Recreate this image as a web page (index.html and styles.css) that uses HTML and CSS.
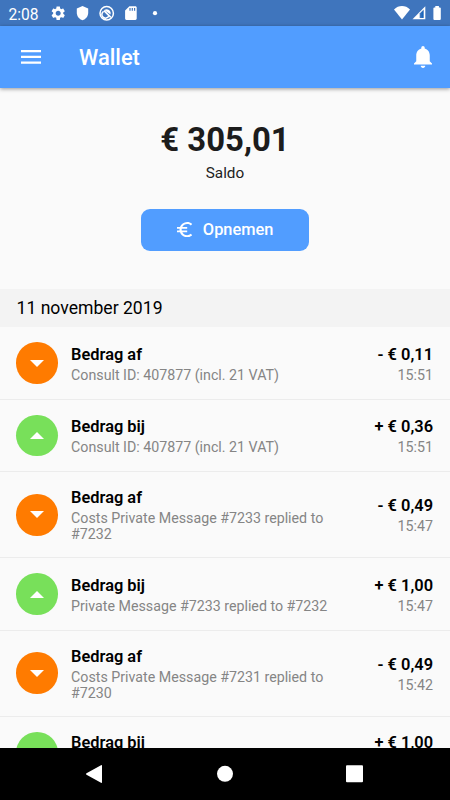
FILE: index.html
```html
<!DOCTYPE html>
<html lang="nl">
<head>
<meta charset="utf-8">
<title>Wallet</title>
<link rel="stylesheet" href="styles.css">
</head>
<body>
<div class="screen">
  <div class="status">
    <span class="clock">2:08</span>
    <svg class="status-left" width="120" height="26" viewBox="0 0 120 26" fill="#fff">
      <path transform="translate(9.8 4.8) scale(.7)" d="M19.14 12.94c.04-.3.06-.61.06-.94 0-.32-.02-.64-.07-.94l2.03-1.58c.18-.14.23-.41.12-.61l-1.92-3.32c-.12-.22-.37-.29-.59-.22l-2.39.96c-.5-.38-1.03-.7-1.62-.94l-.36-2.54c-.04-.24-.24-.41-.48-.41h-3.84c-.24 0-.43.17-.47.41l-.36 2.54c-.59.24-1.13.57-1.62.94l-2.39-.96c-.22-.08-.47 0-.59.22L2.74 8.87c-.12.21-.08.47.12.61l2.03 1.58c-.05.3-.09.63-.09.94s.02.64.07.94l-2.03 1.58c-.18.14-.23.41-.12.61l1.92 3.32c.12.22.37.29.59.22l2.39-.96c.5.38 1.03.7 1.62.94l.36 2.54c.05.24.24.41.48.41h3.84c.24 0 .44-.17.47-.41l.36-2.54c.59-.24 1.13-.56 1.62-.94l2.39.96c.22.08.47 0 .59-.22l1.92-3.32c.12-.22.07-.47-.12-.61zM12 15.6c-1.98 0-3.6-1.62-3.6-3.6s1.62-3.6 3.6-3.6 3.6 1.62 3.6 3.6-1.62 3.6-3.6 3.6z"/>
      <path d="M42.500 6l5.700 2.500v4.200c0 3.500-2.400 6.500-5.700 7.500-3.300-1-5.700-4-5.700-7.500V8.500z"/>
      <g fill="none" stroke="#fff"><circle cx="66.700" cy="13.200" r="6.700" stroke-width="1.500"/><path d="M63.600 11.300a3.700 3.700 0 1 0 5.200 4.900" stroke-width="1.500"/><path d="M64.200 10.100a4 4 0 0 1 6.300 4.300z" fill="#fff" stroke="none"/><path d="M64 10.600l6.800 6.800" stroke-width="1.600"/></g>
      <path fill-rule="evenodd" d="M89.400 6.300h6c.7 0 1.300.6 1.300 1.300v11c0 .7-.6 1.300-1.300 1.300h-9c-.7 0-1.300-.6-1.300-1.300v-8zM89.400 8v2.700h1.200V8zM91.700 8v2.700h1.200V8zM94 8v2.700h1.200V8z"/>
      <circle cx="115" cy="13.200" r="2.100"/>
    </svg>
    <svg class="status-right" width="50" height="26" viewBox="0 0 50 26" fill="#fff">
      <path d="M2 9.500C6.500 4.900 13.500 4.900 18 9.500l-8 10z"/>
      <path d="M20.500 19.200L33.300 6.200v13z"/><path d="M27.700 18v-4.500l4-4V18z" fill="#3f75bd"/><path d="M29.500 17.800v-5l1.700-1.700v6.700z" fill="#1766bd"/>
      <path d="M43.300 6h3.600v1.400h1c.5 0 .9.400.9.900v10.800c0 .5-.4.900-.9.900h-5.600c-.5 0-.9-.4-.9-.9V8.300c0-.5.400-.9.900-.9h1z"/>
    </svg>
  </div>
  <header class="bar">
    <svg class="menu" width="20" height="14" viewBox="0 0 20 14" fill="#fff"><path d="M0 0h20v2.200H0zM0 5.800h20V8H0zM0 11.500h20v2.200H0z"/></svg>
    <h1>Wallet</h1>
    <svg class="bell" width="18" height="22" viewBox="4 2.500 16 19.500" preserveAspectRatio="none" fill="#fff"><path d="M12 22c1.100 0 2-.9 2-2h-4c0 1.100.9 2 2 2zm6-6v-5c0-3.070-1.630-5.640-4.500-6.320V4c0-.83-.67-1.500-1.500-1.500s-1.500.67-1.500 1.500v.68C7.640 5.360 6 7.920 6 11v5l-2 2v1h16v-1l-2-2z"/></svg>
  </header>
  <main>
    <section class="balance">
      <div class="total">€ 305,01</div>
      <div class="label">Saldo</div>
      <button class="withdraw">
        <svg width="15.300" height="15.300" viewBox="3 3 18 18" fill="#fff"><path d="M15 18.500c-2.510 0-4.680-1.420-5.760-3.500H15v-2H8.580c-.05-.33-.08-.66-.08-1s.03-.67.080-1H15V9H9.240C10.320 6.920 12.500 5.500 15 5.500c1.610 0 3.090.590 4.230 1.570L21 5.300C19.410 3.870 17.300 3 15 3c-3.920 0-7.240 2.510-8.480 6H3v2h3.060c-.04.330-.06.660-.06 1s.02.670.060 1H3v2h3.520c1.240 3.490 4.560 6 8.480 6 2.310 0 4.410-.87 6-2.300l-1.780-1.770c-1.130.980-2.600 1.570-4.220 1.570z"/></svg>
        <span>Opnemen</span>
      </button>
    </section>
    <h2>11 november 2019</h2>
    <ul>
      <li><i class="dot out"></i><div class="info"><b>Bedrag af</b><p>Consult ID: 407877 (incl. 21 VAT)</p></div><div class="amount"><b>- € 0,11</b><p>15:51</p></div></li>
      <li><i class="dot in"></i><div class="info"><b>Bedrag bij</b><p>Consult ID: 407877 (incl. 21 VAT)</p></div><div class="amount"><b>+ € 0,36</b><p>15:51</p></div></li>
      <li class="tall"><i class="dot out"></i><div class="info"><b>Bedrag af</b><p>Costs Private Message #7233 replied to #7232</p></div><div class="amount"><b>- € 0,49</b><p>15:47</p></div></li>
      <li><i class="dot in"></i><div class="info"><b>Bedrag bij</b><p>Private Message #7233 replied to #7232</p></div><div class="amount"><b>+ € 1,00</b><p>15:47</p></div></li>
      <li class="tall"><i class="dot out"></i><div class="info"><b>Bedrag af</b><p>Costs Private Message #7231 replied to #7230</p></div><div class="amount"><b>- € 0,49</b><p>15:42</p></div></li>
      <li class="last"><i class="dot in"></i><div class="info"><b>Bedrag bij</b></div><div class="amount"><b>+ € 1,00</b></div></li>
    </ul>
  </main>
  <nav>
    <svg width="450" height="52" viewBox="0 0 450 52" fill="#fff"><path d="M86.500 25.200L101 17.200q1-.5 1 .6v16.400q0 1.100-1 .6L86.500 26.800q-1.200-.8 0-1.600z"/><circle cx="225" cy="25.800" r="8"/><rect x="346" y="17.300" width="17" height="17" rx="1"/></svg>
  </nav>
</div>
</body>
</html>
```
FILE: styles.css
```css
* { box-sizing: border-box; margin: 0; padding: 0; }
body { font-family: Roboto, sans-serif; background: #fafafa; color: #000; }
.screen { width: 450px; height: 800px; display: flex; flex-direction: column; overflow: hidden; }
.status { height: 26px; flex: none; background: #3f75bd; display: flex; align-items: center; color: #fff; padding-right: 8px; }
.clock { width: 40px; padding-left: 8.500px; font-size: 15.600px; line-height: 26px; padding-top: 3px; white-space: nowrap; }
.status-right { margin-left: auto; }
.bar { height: 61.500px; flex: none; background: #519dff; color: #fff; display: flex; align-items: center; padding: 0 18.500px 0 20.500px; box-shadow: 0 1px 4px rgba(0,0,0,.4); position: relative; }
.bar h1 { font-size: 21.900px; font-weight: 500; margin-left: 38.500px; line-height: 26px; padding-top: 2px; }
.bell { margin-left: auto; }
main { flex: 1; min-height: 0; overflow: hidden; }
.balance { height: 201.500px; display: flex; flex-direction: column; align-items: center; }
.total { margin-top: 31px; font-size: 32.900px; line-height: 42px; font-weight: 700; color: #1c1c1c; }
.label { margin-top: 3px; font-size: 15.300px; line-height: 18px; color: #222; }
.withdraw { margin-top: 27px; width: 168px; height: 42px; flex: none; border: 0; border-radius: 9px; background: #519dff; color: #fff; display: flex; align-items: center; justify-content: center; gap: 11px; font: 500 16.400px Roboto, sans-serif; }
h2 { height: 38.300px; background: #f3f3f3; padding-left: 16.500px; font-size: 17.600px; line-height: 38px; font-weight: 400; }
ul { list-style: none; }
li { height: 72.500px; border-bottom: 1px solid #ececec; display: flex; align-items: center; padding: 0 17px 0 16.400px; }
li.tall { height: 86px; }
li.last { align-items: flex-start; padding-top: 15.500px; }
.dot { width: 41.700px; height: 41.700px; flex: none; border-radius: 50%; display: flex; align-items: center; justify-content: center; }
.dot::after { content: ""; border: 7px solid transparent; }
.out { background: #ff7b00; }
.out::after { border-top-color: #fff; border-bottom: 0; }
.in { background: #78e05a; }
.in::after { border-bottom-color: #fff; border-top: 0; }
.info { width: 280px; margin-left: 13px; }
.amount { margin-left: auto; text-align: right; white-space: nowrap; }
b { display: block; font-size: 16.400px; line-height: 22px; font-weight: 600; }
p { font-size: 14.230px; line-height: 16px; margin-top: 1px; color: #858585; }
nav { height: 52px; flex: none; background: #000; }
nav svg { display: block; }
```
